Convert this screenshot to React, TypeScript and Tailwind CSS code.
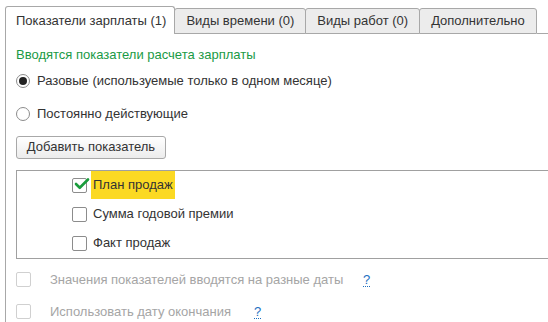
import { Check } from 'lucide-react';

const tabs = ['Виды времени (0)', 'Виды работ (0)', 'Дополнительно'];

const items = [
  { label: 'План продаж', checked: true },
  { label: 'Сумма годовой премии', checked: false },
  { label: 'Факт продаж', checked: false },
];

function Radio({ on, label }: { on?: boolean; label: string }) {
  return (
    <div className="flex h-[20px] items-center gap-[7px]">
      <span className="flex h-[14px] w-[14px] items-center justify-center rounded-full border border-[#8c8c8c] bg-white">
        {on && <span className="h-[8px] w-[8px] rounded-full bg-[#222]" />}
      </span>
      <span>{label}</span>
    </div>
  );
}

function Box({ checked, disabled }: { checked?: boolean; disabled?: boolean }) {
  return (
    <span
      className={`relative h-[15px] w-[15px] shrink-0 rounded-[2px] border bg-white ${
        disabled ? 'border-[#d0d0d0]' : 'border-[#8c8c8c]'
      }`}
    >
      {checked && (
        <Check
          size={18}
          strokeWidth={3.5}
          className="absolute -top-[4px] left-[0px] text-[#1a9c3c]"
        />
      )}
    </span>
  );
}

function Hint() {
  return (
    <span className="border-b border-dotted border-[#1d6fbf] leading-[13px] text-[#1d6fbf]">?</span>
  );
}

export default function App() {
  return (
    <div
      className="h-[322px] w-[548px] overflow-hidden bg-white text-[13px] text-[#333]"
      style={{ fontFamily: '"Liberation Sans", Arial, sans-serif' }}
    >
      {/* tab strip */}
      <div className="flex items-end pl-[5px] pt-[6px]">
        <div className="flex h-[28px] items-center rounded-t-[3px] border border-b-0 border-[#a8a8a8] bg-white pl-[10px] pr-[8px]">
          Показатели зарплаты (1)
        </div>
        {tabs.map((t) => (
          <div
            key={t}
            className="-ml-px flex h-[26px] items-center rounded-t-[3px] border border-[#a8a8a8] bg-[#ececec] px-[11px] first:ml-0 first:border-l-0"
          >
            {t}
          </div>
        ))}
        <div className="flex-1 border-b border-[#a8a8a8]" />
      </div>

      {/* tab body */}
      <div className="ml-[5px] flex h-[300px] flex-col border-l border-[#a8a8a8] pl-[10px]">
        <div className="mt-[11px] text-[#1a9a45]">Вводятся показатели расчета зарплаты</div>

        <div className="mt-[6px]">
          <Radio on label="Разовые (используемые только в одном месяце)" />
        </div>
        <div className="mt-[13px]">
          <Radio label="Постоянно действующие" />
        </div>

        <button className="mt-[12px] h-[23px] w-[150px] rounded-[3px] border border-[#a8a8a8] bg-gradient-to-b from-white to-[#ececec] text-[#333]">
          Добавить показатель
        </button>

        <div className="mt-[11px] flex h-[89px] flex-col border border-r-0 border-[#a0a0a0] pl-[55px]">
          {items.map((it) => (
            <div key={it.label} className="flex h-[29px] items-center gap-[4px]">
              <Box checked={it.checked} />
              <span
                className={`flex h-[28px] items-center px-[2px] ${it.checked ? 'bg-[#fbd923]' : ''}`}
              >
                {it.label}
              </span>
            </div>
          ))}
        </div>

        <div className="mt-[13px] flex h-[16px] items-center text-[#a5a5a5]">
          <Box disabled />
          <span className="ml-[19px] w-[313px]">Значения показателей вводятся на разные даты</span>
          <Hint />
        </div>
        <div className="mt-[16px] flex h-[16px] items-center text-[#a5a5a5]">
          <Box disabled />
          <span className="ml-[19px] w-[204px]">Использовать дату окончания</span>
          <Hint />
        </div>
      </div>
    </div>
  );
}
